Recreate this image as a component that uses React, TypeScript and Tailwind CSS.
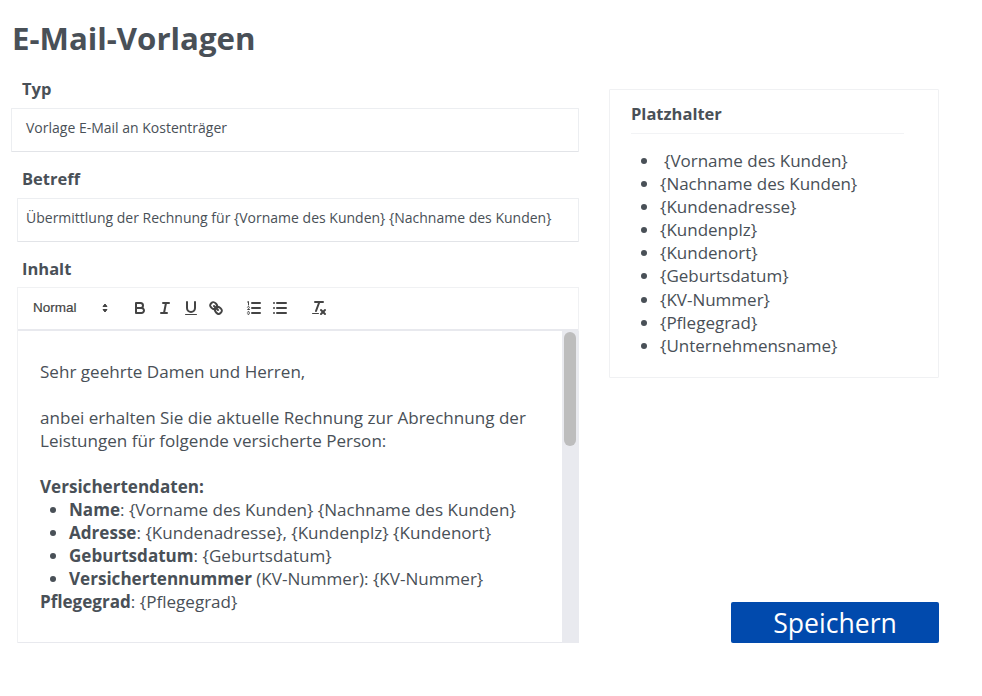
const placeholders = [
  '{Vorname des Kunden}',
  '{Nachname des Kunden}',
  '{Kundenadresse}',
  '{Kundenplz}',
  '{Kundenort}',
  '{Geburtsdatum}',
  '{KV-Nummer}',
  '{Pflegegrad}',
  '{Unternehmensname}',
]

function Icon({ children }: { children: React.ReactNode }) {
  return (
    <svg
      viewBox="0 0 18 18"
      className="h-[18px] w-[18px] shrink-0"
      fill="none"
      stroke="#444"
      strokeWidth={2}
      strokeLinecap="round"
      strokeLinejoin="round"
    >
      {children}
    </svg>
  )
}

function Toolbar() {
  return (
    <div className="flex h-[43px] items-center border-b-2 border-[#e8e9ee] pb-px pl-[15px]">
      <span className="w-[63px] font-['Liberation_Sans',sans-serif] text-[13.5px] text-[#444] [-webkit-text-stroke:0.2px_#444]">Normal</span>
      <svg viewBox="0 0 18 18" className="h-[18px] w-[18px] shrink-0" fill="#444">
        <polygon points="7 10.5 9 13 11 10.5" stroke="#444" strokeLinejoin="round" />
        <polygon points="7 7.5 9 5 11 7.5" stroke="#444" strokeLinejoin="round" />
      </svg>
      <div className="ml-[17px] flex gap-[7.3px]">
        <Icon>
          <path d="M5,4H9.5A2.5,2.5,0,0,1,12,6.5v0A2.5,2.5,0,0,1,9.5,9H5V4Z" />
          <path d="M5,9h5.5A2.5,2.5,0,0,1,13,11.5v0A2.5,2.5,0,0,1,10.5,14H5V9Z" />
        </Icon>
        <Icon>
          <line x1="7" x2="13" y1="4" y2="4" />
          <line x1="5" x2="11" y1="14" y2="14" />
          <line x1="8" x2="10" y1="14" y2="4" />
        </Icon>
        <Icon>
          <path d="M5,3V9a4.012,4.012,0,0,0,4,4H9a4.012,4.012,0,0,0,4-4V3" />
          <rect x="3" y="15" width="12" height="1" rx="0.5" fill="#444" strokeWidth={0} />
        </Icon>
        <Icon>
          <line x1="7" x2="11" y1="7" y2="11" />
          <path d="M8.9,4.577a3.476,3.476,0,0,1,.36,4.679A3.476,3.476,0,0,1,4.577,8.9C3.185,7.5,2.035,6.4,4.217,4.217S7.5,3.185,8.9,4.577Z" />
          <path d="M13.423,9.1a3.476,3.476,0,0,0-4.679-.36,3.476,3.476,0,0,0,.36,4.679c1.392,1.392,2.5,2.542,4.679.36S14.815,10.5,13.423,9.1Z" />
        </Icon>
      </div>
      <div className="ml-[20px] flex gap-2">
        <Icon>
          <line x1="7" x2="15" y1="4" y2="4" />
          <line x1="7" x2="15" y1="9" y2="9" />
          <line x1="7" x2="15" y1="14" y2="14" />
          <path strokeWidth={1} d="M3.5,6V2.5L2.5,3" />
          <path strokeWidth={1} d="M4.5,10.5h-2c0-.234,1.85-1.076,1.85-2.234A0.959,0.959,0,0,0,2.5,8.156" />
          <path strokeWidth={1} d="M2.5,14.846a0.959,0.959,0,0,0,1.85-.109A0.7,0.7,0,0,0,3.75,14a0.688,0.688,0,0,0,.6-0.736,0.959,0.959,0,0,0-1.85-.109" />
        </Icon>
        <Icon>
          <line x1="6" x2="15" y1="4" y2="4" />
          <line x1="6" x2="15" y1="9" y2="9" />
          <line x1="6" x2="15" y1="14" y2="14" />
          <line x1="3" x2="3" y1="4" y2="4" />
          <line x1="3" x2="3" y1="9" y2="9" />
          <line x1="3" x2="3" y1="14" y2="14" />
        </Icon>
      </div>
      <div className="ml-[21px]">
        <Icon>
          <line x1="5" x2="13" y1="3" y2="3" />
          <line x1="6" x2="9.35" y1="12" y2="3" />
          <line x1="11" x2="15" y1="11" y2="15" />
          <line x1="15" x2="11" y1="11" y2="15" />
          <rect x="2" y="14" width="7" height="1" rx="0.5" fill="#444" strokeWidth={0} />
        </Icon>
      </div>
    </div>
  )
}

export default function App() {
  return (
    <div className="h-[696px] w-[982px] overflow-hidden bg-white font-['Open_Sans',sans-serif] text-[#495057]">
      <h1 className="pl-3 pt-[15px] text-[31.2px] font-bold leading-[46px]">E-Mail-Vorlagen</h1>

      <div className="mt-[17px] flex items-stretch">
        <div className="ml-[11px] w-[568px]">
          <label className="block pl-[11px] text-[16.5px] font-bold leading-[22px]">Typ</label>
          <div className="mt-2 flex h-11 items-start rounded-[1px] border border-[#eceef1] border-b-[#e2e4e8] pl-[14px] pt-[10px] text-[14px] leading-[18px]">
            Vorlage E-Mail an Kostenträger
          </div>

          <label className="mt-4 block pl-[11px] text-[16.5px] font-bold leading-[22px]">Betreff</label>
          <div className="ml-[6px] mt-2 flex h-11 items-start rounded-[1px] border border-[#eceef1] border-b-[#e2e4e8] pl-2 pt-[10px] text-[14px] leading-[18px]">
            Übermittlung der Rechnung für {'{'}Vorname des Kunden{'}'} {'{'}Nachname des Kunden{'}'}
          </div>

          <label className="mt-4 block pl-[11px] text-[16.5px] font-bold leading-[22px]">Inhalt</label>
          <div className="ml-[6px] mt-[7px] border-x border-t border-[#f0f1f3]">
            <Toolbar />
            <div className="flex h-[312px]">
              <div className="flex-1 overflow-hidden border-b border-[#e8e9ee] pl-[22px] pr-6 pt-[29px] text-[17.07px] leading-[23px]">
                <p>Sehr geehrte Damen und Herren,</p>
                <p className="mt-[23px]">
                  anbei erhalten Sie die aktuelle Rechnung zur Abrechnung der Leistungen für folgende versicherte Person:
                </p>
                <p className="mt-[23px] font-bold">Versichertendaten:</p>
                <ul className="list-disc pl-[29px]">
                  <li><strong>Name</strong>: {'{'}Vorname des Kunden{'}'} {'{'}Nachname des Kunden{'}'}</li>
                  <li><strong>Adresse</strong>: {'{'}Kundenadresse{'}'}, {'{'}Kundenplz{'}'} {'{'}Kundenort{'}'}</li>
                  <li><strong>Geburtsdatum</strong>: {'{'}Geburtsdatum{'}'}</li>
                  <li><strong>Versichertennummer</strong> (KV-Nummer): {'{'}KV-Nummer{'}'}</li>
                </ul>
                <p><strong>Pflegegrad</strong>: {'{'}Pflegegrad{'}'}</p>
              </div>
              <div className="-mr-px w-[17px] shrink-0 bg-[#e9eaef] pl-[2px] pr-[3px] pt-px">
                <div className="h-[114px] rounded-[6px] bg-[#bdbdbd]" />
              </div>
            </div>
          </div>
        </div>

        <div className="ml-[30px] flex w-[330px] flex-col">
          <div className="mt-[11px] h-[289px] rounded-[1px] border border-[#f0f1f3] px-[21px] pt-[13px]">
            <h2 className="w-[273px] border-b border-[#f2f3f5] pb-[8px] text-[16.5px] font-bold leading-[22px]">Platzhalter</h2>
            <ul className="mt-[15px] list-disc pl-[29px] text-[17px] leading-[23.1px]">
              {placeholders.map((item, i) => (
                <li key={item} className={i === 0 ? 'pl-[4px]' : ''}>{item}</li>
              ))}
            </ul>
          </div>
          <button className="ml-[122px] mt-auto h-[41px] w-[208px] rounded-[2px] bg-[#014aad] pt-px text-[26.6px] leading-[41px] text-white">
            Speichern
          </button>
        </div>
      </div>
    </div>
  )
}
